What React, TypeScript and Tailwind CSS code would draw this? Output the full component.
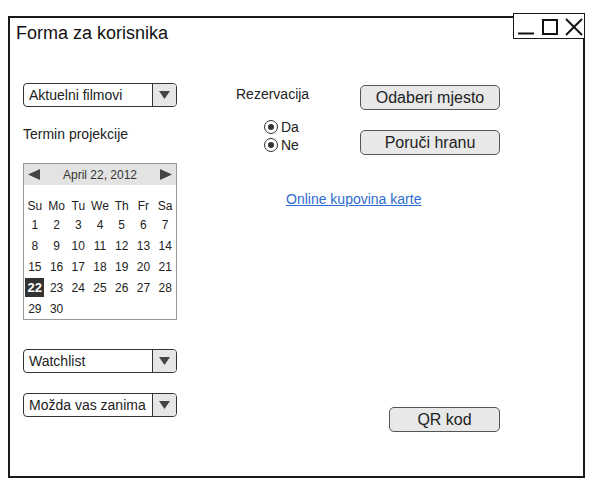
import React from "react";

const font = { fontFamily: '"Liberation Sans", Arial, sans-serif' };

function Dropdown({ label, className = "" }: { label: string; className?: string }) {
  return (
    <div className={`flex h-[24px] w-[154px] overflow-hidden rounded-[4px] border border-[#333] bg-white ${className}`}>
      <div className="flex flex-1 items-center overflow-hidden whitespace-nowrap pl-[5px] text-[14px] text-[#222]">{label}</div>
      <div className="flex w-[24px] items-center justify-center border-l border-[#333] bg-[#e6e6e6]">
        <svg width="11" height="8" viewBox="0 0 11 8">
          <polygon points="0,0 11,0 5.5,8" fill="#444" />
        </svg>
      </div>
    </div>
  );
}

function Btn({ label, className = "" }: { label: string; className?: string }) {
  return (
    <div className={`flex h-[25px] items-center justify-center rounded-[5px] border border-[#555] bg-[#e8e8e8] text-[16px] text-[#222] ${className}`}>
      {label}
    </div>
  );
}

function Radio({ label }: { label: string }) {
  return (
    <div className="flex h-[18px] items-center">
      <div className="flex h-[14px] w-[14px] items-center justify-center rounded-full border-[1.5px] border-[#333] bg-white">
        <div className="h-[6px] w-[6px] rounded-full bg-[#333]" />
      </div>
      <span className="ml-[3px] text-[14px] text-[#222]">{label}</span>
    </div>
  );
}

function Calendar() {
  const names = ["Su", "Mo", "Tu", "We", "Th", "Fr", "Sa"];
  const days: number[] = [];
  for (let i = 1; i <= 30; i++) days.push(i);
  const rows: number[][] = [];
  for (let i = 0; i < days.length; i += 7) rows.push(days.slice(i, i + 7));
  return (
    <div className="mt-[21px] h-[157px] w-[154px] border border-[#999] bg-white">
      <div className="flex h-[21px] items-center justify-between bg-[#e3e3e3] px-[4px] text-[12px] text-[#333]">
        <svg width="12" height="11" viewBox="0 0 12 11">
          <polygon points="12,0 12,11 0,5.5" fill="#444" />
        </svg>
        <span>April 22, 2012</span>
        <svg width="12" height="11" viewBox="0 0 12 11">
          <polygon points="0,0 0,11 12,5.5" fill="#444" />
        </svg>
      </div>
      <div className="pt-[12px]">
        <div className="grid h-[17px] grid-cols-7 items-center text-center text-[12px] text-[#222]">
          {names.map((n) => (
            <div key={n}>{n}</div>
          ))}
        </div>
        {rows.map((r, i) => (
          <div key={i} className="grid h-[21px] grid-cols-7 items-center text-center text-[12px] text-[#222]">
            {r.map((d) => (
              <div key={d} className="flex items-center justify-center">
                {d === 22 ? (
                  <span className="flex h-[19px] w-[19px] items-center justify-center bg-[#333] text-[13px] font-bold text-white">22</span>
                ) : (
                  d
                )}
              </div>
            ))}
          </div>
        ))}
      </div>
    </div>
  );
}

export default function App() {
  return (
    <div className="h-[494px] w-[594px] bg-white pl-[8px] pt-[16px]" style={font}>
      <div className="relative box-border h-[462px] w-[577px] border-2 border-[#1a1a1a] bg-white">
        <div className="absolute left-[503px] top-[-5px] h-[26px] w-[72px] border border-[#1a1a1a] bg-white">
          <svg width="70" height="24" viewBox="0 0 70 24">
            <line x1="4" y1="19.5" x2="20" y2="19.5" stroke="#111" strokeWidth="2" />
            <rect x="29" y="6" width="14" height="14" fill="none" stroke="#111" strokeWidth="2" />
            <line x1="52" y1="5" x2="68" y2="21" stroke="#111" strokeWidth="2" />
            <line x1="68" y1="5" x2="52" y2="21" stroke="#111" strokeWidth="2" />
          </svg>
        </div>
        <div className="pl-[6px] pt-[4px] text-[18px] leading-[22px] text-[#111]">Forma za korisnika</div>
        <div className="mt-[39px] flex pl-[13px]">
          <div className="flex w-[154px] flex-col">
            <Dropdown label="Aktuelni filmovi" />
            <div className="mt-[19px] text-[14px] leading-[16px] text-[#222]">Termin projekcije</div>
            <Calendar />
            <Dropdown label="Watchlist" className="mt-[29px]" />
            <Dropdown label="Možda vas zanima" className="mt-[20px]" />
          </div>
          <div className="ml-[59px] flex w-[124px] flex-col">
            <div className="mt-[3px] text-[14px] leading-[16px] text-[#222]">Rezervacija</div>
            <div className="ml-[28px] mt-[16px]">
              <Radio label="Da" />
              <Radio label="Ne" />
            </div>
            <div className="ml-[50px] mt-[37px] whitespace-nowrap text-[14px] leading-[16px] text-[#2f6bd0] underline">
              Online kupovina karte
            </div>
          </div>
          <div className="flex flex-col">
            <Btn label="Odaberi mjesto" className="mt-[2px] w-[140px]" />
            <Btn label="Poruči hranu" className="mt-[20px] w-[140px]" />
            <Btn label="QR kod" className="ml-[29px] mt-[252px] w-[111px]" />
          </div>
        </div>
      </div>
    </div>
  );
}
